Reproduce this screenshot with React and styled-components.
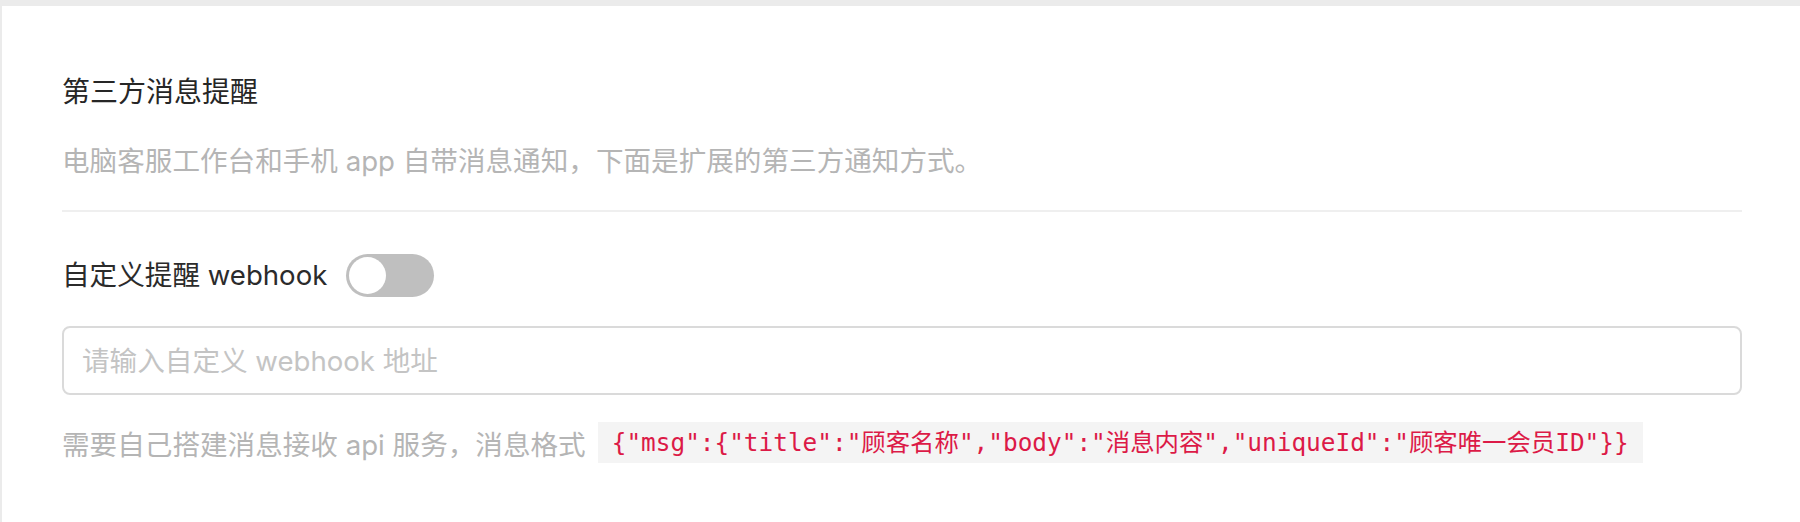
import React from "react"
import styled, { createGlobalStyle } from "styled-components"

const GlobalStyle = createGlobalStyle`
  html, body {
    margin: 0;
    padding: 0;
    background: #ebebeb;
  }
  body {
    font-family: Inter, "Noto Sans CJK SC", sans-serif;
  }
`

const Panel = styled.div`
  margin: 6px 0 0 2px;
  min-height: 516px;
  box-sizing: border-box;
  background: #fff;
  padding: 66px 58px 0 60px;
`

const Title = styled.div`
  font-size: 28px;
  line-height: 40px;
  color: #262626;
`

const Desc = styled.div`
  margin-top: 29px;
  font-size: 27.6px;
  line-height: 40px;
  color: #b5b5b5;
`

const Divider = styled.div`
  margin-top: 29px;
  height: 2px;
  background: #efefef;
`

const SwitchRow = styled.div`
  margin-top: 42px;
  display: flex;
  align-items: center;
  height: 43px;
`

const Label = styled.span`
  font-size: 27.6px;
  line-height: 43px;
  color: #2b2b2b;
  margin-right: 19px;
`

const Switch = styled.button`
  display: flex;
  align-items: center;
  justify-content: ${p => (p.on ? "flex-end" : "flex-start")};
  width: 88px;
  height: 43px;
  padding: 0 3px;
  box-sizing: border-box;
  border: none;
  border-radius: 22px;
  background: ${p => (p.on ? "#1890ff" : "#bfbfbf")};
  cursor: pointer;
`

const Knob = styled.span`
  width: 37px;
  height: 37px;
  border-radius: 50%;
  background: #fff;
`

const Input = styled.input`
  display: block;
  margin-top: 29px;
  width: 100%;
  height: 69px;
  box-sizing: border-box;
  border: 2px solid #dadada;
  border-radius: 8px;
  padding: 0 18px;
  font-family: Inter, "Noto Sans CJK SC", sans-serif;
  font-size: 27.6px;
  color: #333;
  outline: none;
  &::placeholder {
    color: #c4c4c4;
  }
`

const Help = styled.div`
  margin-top: 27px;
  display: flex;
  align-items: center;
  font-size: 27.6px;
  color: #b5b5b5;
`

const Code = styled.code`
  margin-left: 12px;
  padding: 0 14px;
  line-height: 41px;
  background: #f4f4f4;
  color: #dc1a47;
  font-family: "DejaVu Sans Mono", "Noto Sans CJK SC", monospace;
  font-size: 24.4px;
  white-space: nowrap;
`

export default function App() {
  const [on, setOn] = React.useState(false)
  return (
    <>
      <GlobalStyle />
      <Panel>
        <Title>第三方消息提醒</Title>
        <Desc>电脑客服工作台和手机 app 自带消息通知，下面是扩展的第三方通知方式。</Desc>
        <Divider />
        <SwitchRow>
          <Label>自定义提醒 webhook</Label>
          <Switch on={on} onClick={() => setOn(!on)}>
            <Knob />
          </Switch>
        </SwitchRow>
        <Input placeholder="请输入自定义 webhook 地址" />
        <Help>
          需要自己搭建消息接收 api 服务，消息格式
          <Code>{'{"msg":{"title":"顾客名称","body":"消息内容","uniqueId":"顾客唯一会员ID"}}'}</Code>
        </Help>
      </Panel>
    </>
  )
}
